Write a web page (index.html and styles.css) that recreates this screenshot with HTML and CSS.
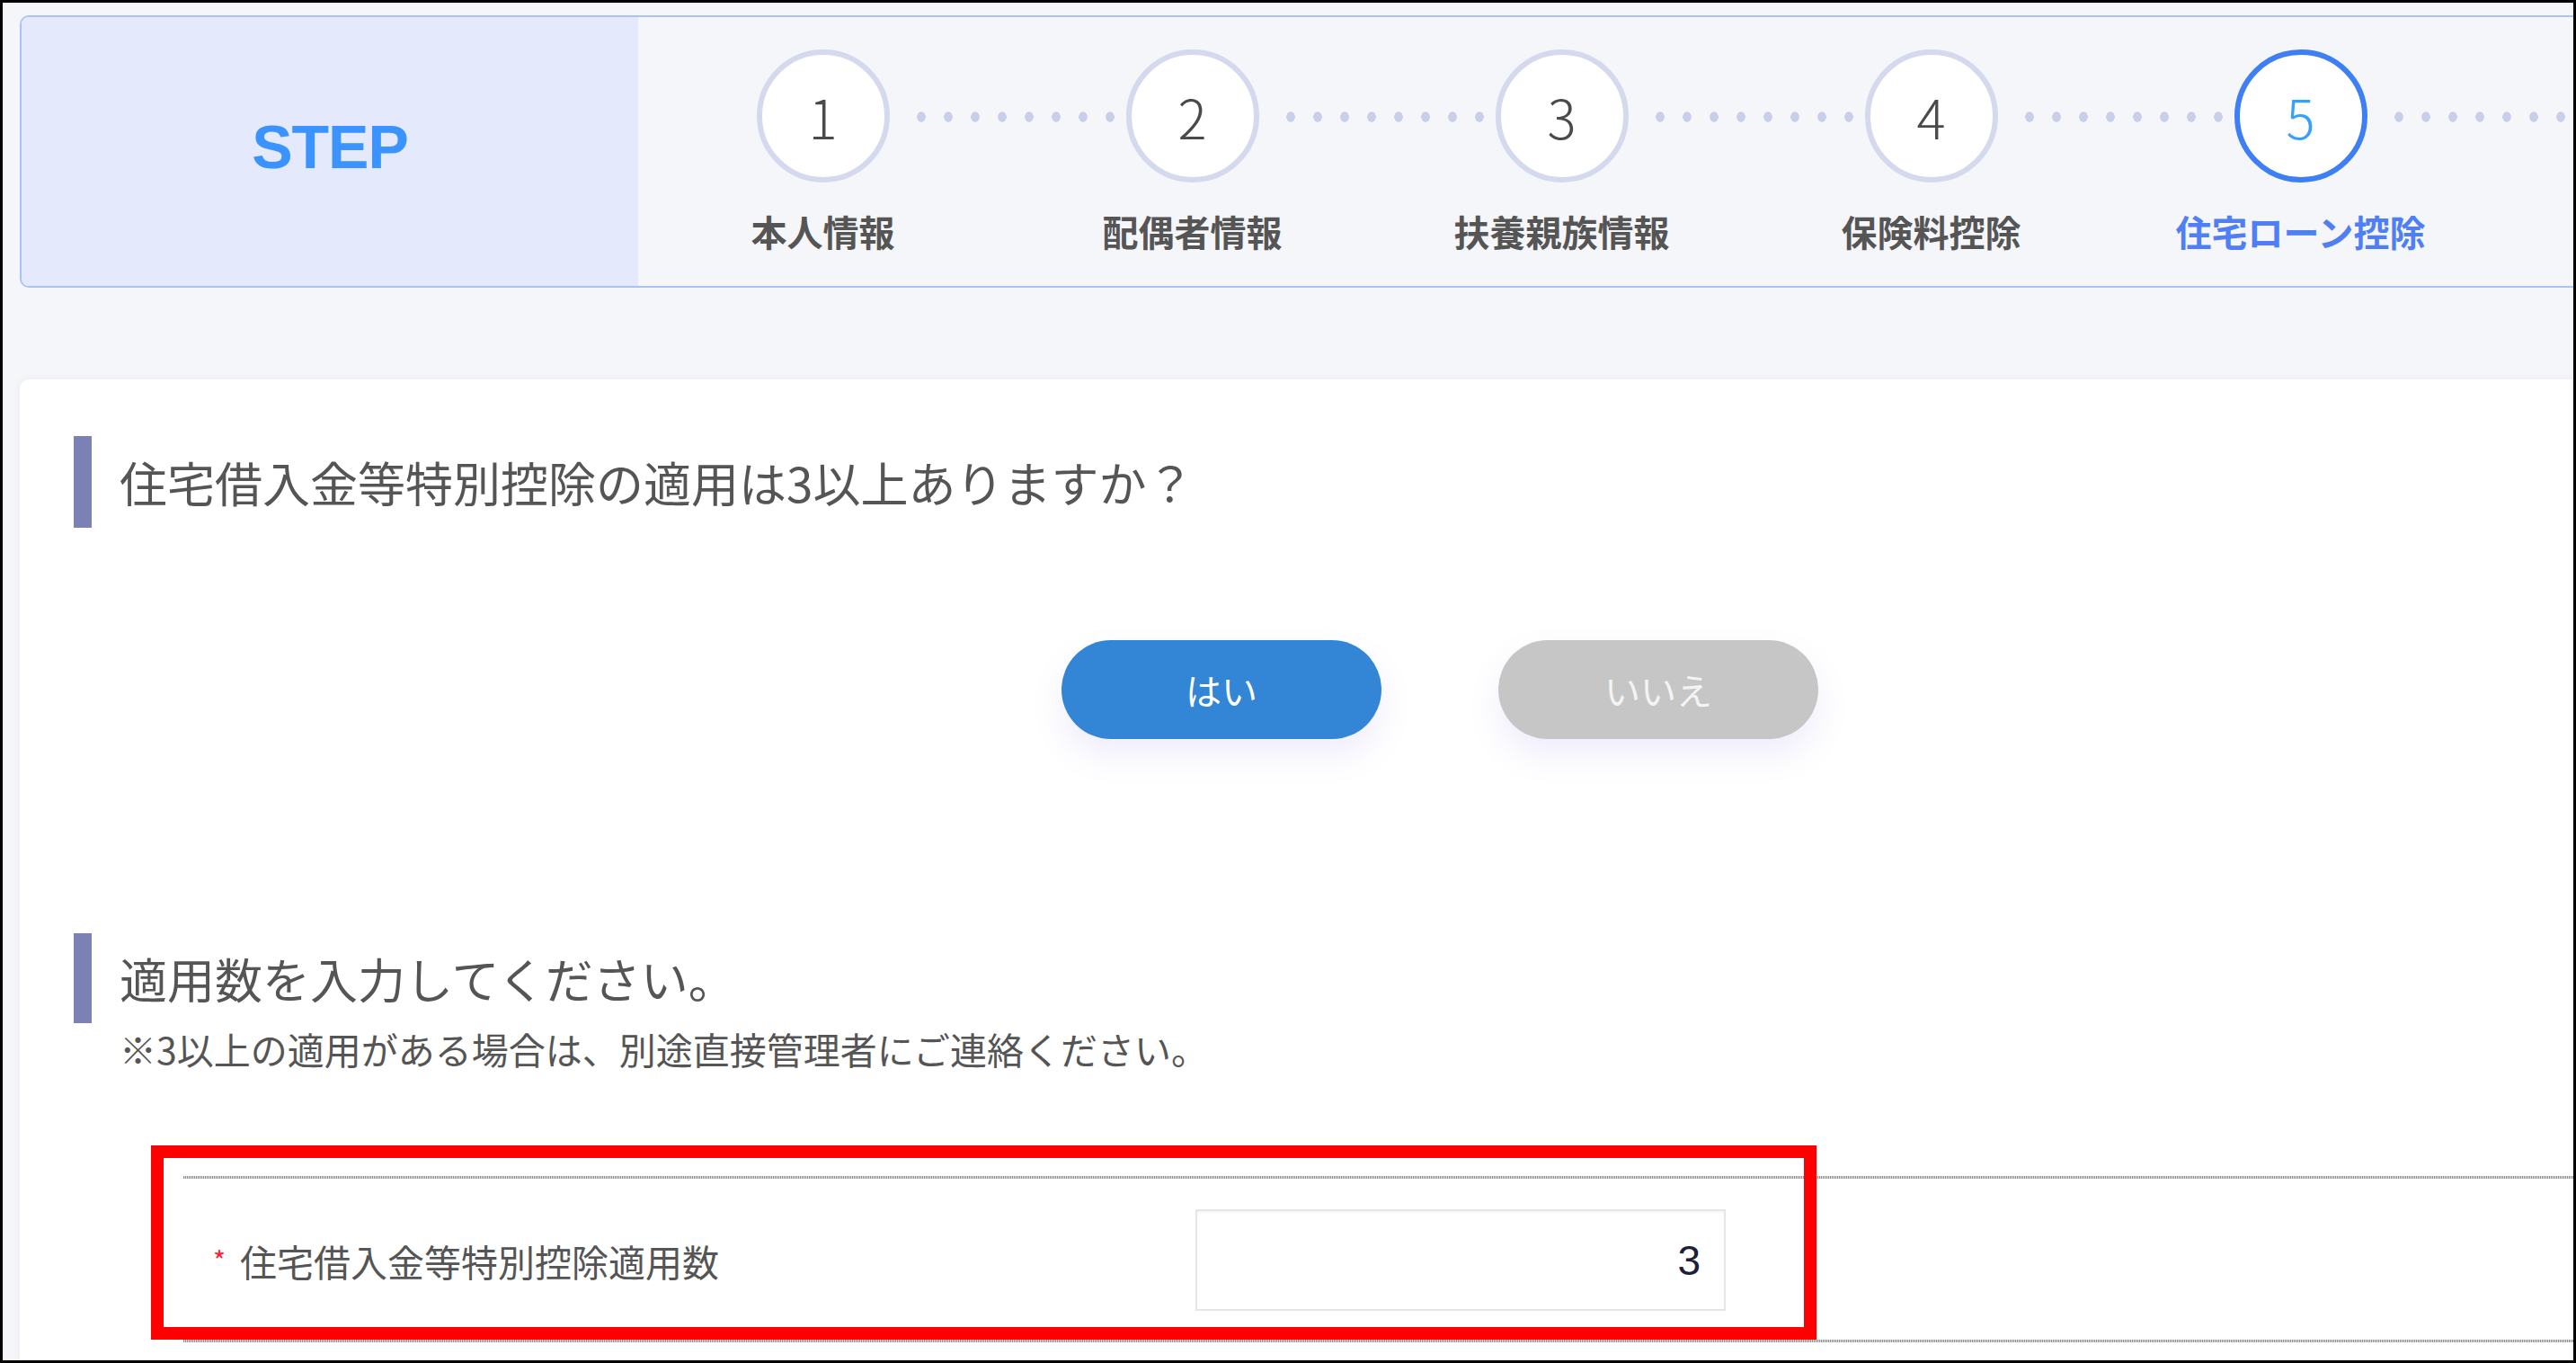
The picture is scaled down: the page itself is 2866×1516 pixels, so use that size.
FILE: index.html
```html
<!DOCTYPE html>
<html lang="ja">
<head>
    <meta charset="UTF-8">
    <meta name="viewport" content="width=device-width, initial-scale=1.0">
    <title>住宅ローン控除</title>
    <link rel="stylesheet" href="styles.css">
</head>
<body>

    <div class="frame">

        <!-- STEP BAR -->
        <nav class="stepper">
            <div class="stepper-title">STEP</div>
            <ol class="steps">
                <li class="step"><span class="step-num">1</span><span class="step-label">本人情報</span></li>
                <li class="step"><span class="step-num">2</span><span class="step-label">配偶者情報</span></li>
                <li class="step"><span class="step-num">3</span><span class="step-label">扶養親族情報</span></li>
                <li class="step"><span class="step-num">4</span><span class="step-label">保険料控除</span></li>
                <li class="step is-current"><span class="step-num">5</span><span class="step-label">住宅ローン控除</span></li>
            </ol>
        </nav>

        <!-- MAIN CARD -->
        <main class="card">
            <h2 class="section-title">住宅借入金等特別控除の適用は3以上ありますか？</h2>

            <div class="choice-row">
                <button class="choice-btn choice-yes">はい</button>
                <button class="choice-btn choice-no">いいえ</button>
            </div>

            <h2 class="section-title section-title-2">適用数を入力してください。</h2>
            <p class="note">※3以上の適用がある場合は、別途直接管理者にご連絡ください。</p>

            <div class="form-row">
                <label class="form-label" for="count"><span class="required">*</span>住宅借入金等特別控除適用数</label>
                <input class="form-input" id="count" type="text" value="3">
                <div class="highlight"></div>
            </div>
        </main>

    </div>

</body>
</html>
```

FILE: styles.css
```css
/* --- General --- */
html, body {
    margin: 0;
    padding: 0;
}

body {
    font-family: "Noto Sans CJK JP", "Noto Sans", sans-serif;
    color: #555;
    background: #fff;
}

.frame {
    position: relative;
    width: 2866px;
    height: 1516px;
    box-sizing: border-box;
    border: 3px solid #000;
    background-color: #f5f6fa;
    overflow: hidden;
}

/* --- Step bar --- */
.stepper {
    display: flex;
    width: 3200px;
    height: 303px;
    box-sizing: border-box;
    margin: 14px 0 0 19px;
    border: 2px solid #aac2f8;
    border-radius: 10px;
    overflow: hidden;
    background-color: #f5f6fa;
}

.stepper-title {
    flex: 0 0 686px;
    display: flex;
    align-items: center;
    justify-content: center;
    padding-bottom: 12px;
    box-sizing: border-box;
    background-color: #e4e9fb;
    color: #3a93ff;
    font-family: "Liberation Sans", Arial, sans-serif;
    font-weight: bold;
    font-size: 68px;
    letter-spacing: -1px;
}

.steps {
    display: flex;
    margin: 0;
    padding: 0;
    list-style: none;
}

.step {
    position: relative;
    flex: 0 0 411px;
    display: flex;
    flex-direction: column;
    align-items: center;
    padding-top: 36px;
}

/* dotted connector to the next step */
.step::after {
    content: "";
    position: absolute;
    top: 105px;
    left: 300px;
    width: 240px;
    height: 12px;
    background: radial-gradient(ellipse 5px 6px at center, #c9cee9 90%, transparent 100%) 0 0 / 30px 12px repeat-x;
}

.step-num {
    width: 148px;
    height: 148px;
    box-sizing: border-box;
    display: flex;
    align-items: center;
    justify-content: center;
    border: 6px solid #d5d9ee;
    border-radius: 50%;
    background: #fff;
    font-size: 60px;
    font-weight: 300;
    color: #4a4a4a;
    line-height: 1;
}

.step-label {
    margin-top: 26px;
    font-size: 40px;
    font-weight: bold;
    line-height: 56px;
    color: #555;
    white-space: nowrap;
}

.step.is-current .step-num {
    border-color: #3f7ff6;
    color: #36a0ff;
}

.step.is-current .step-label {
    color: #4f7ef5;
}

/* --- Card --- */
.card {
    width: 3160px;
    height: 1200px;
    box-sizing: border-box;
    margin: 102px 0 0 19px;
    padding: 63px 60px 0;
    background: #fff;
    border-radius: 10px;
    box-shadow: 0 0 10px rgba(0, 0, 0, 0.06);
}

.section-title {
    display: flex;
    align-items: center;
    height: 102px;
    margin: 0;
    padding-left: 31px;
    border-left: 20px solid #7b81b5;
    font-size: 53px;
    font-weight: 400;
    color: #555;
}

.section-title-2 {
    height: 100px;
    margin-top: 216px;
}

.choice-row {
    display: flex;
    justify-content: center;
    gap: 130px;
    margin-top: 125px;
}

.choice-btn {
    width: 356px;
    height: 110px;
    border: none;
    border-radius: 55px;
    font-family: inherit;
    font-size: 40px;
    color: #fff;
    box-shadow: 0 18px 36px rgba(120, 110, 220, 0.12);
    cursor: pointer;
}

.choice-yes {
    background-color: #3386d6;
}

.choice-no {
    background-color: #c6c6c6;
    color: #f4f4f4;
}

.note {
    margin: 0 0 0 51px;
    font-size: 41px;
    line-height: 56px;
    color: #555;
}

/* --- Form row --- */
.form-row {
    position: relative;
    display: flex;
    align-items: center;
    margin: 114px 0 0 122px;
    padding: 37px 0 35px;
    background-image:
        repeating-linear-gradient(90deg, #8f8f8f 0 1px, #e2e2e2 1px 2px),
        repeating-linear-gradient(90deg, #8f8f8f 0 1px, #e2e2e2 1px 2px);
    background-size: 100% 3px, 100% 3px;
    background-position: top left, bottom left;
    background-repeat: no-repeat;
}

.form-label {
    flex: 0 0 1126px;
    box-sizing: border-box;
    padding-left: 33px;
    font-size: 41px;
    color: #555;
}

.required {
    color: #ff2233;
    font-size: 30px;
    margin-right: 16px;
    vertical-align: 6px;
}

.form-input {
    width: 590px;
    height: 113px;
    box-sizing: border-box;
    padding: 0 26px 0 0;
    border: 2px solid #e6e6e6;
    box-shadow: inset 0 2px 3px rgba(0, 0, 0, 0.04);
    text-align: right;
    font-family: "Liberation Sans", Arial, sans-serif;
    font-size: 46px;
    color: #1e1e3c;
    outline: none;
}

/* red annotation box over the row */
.highlight {
    position: absolute;
    left: -36px;
    top: -34px;
    width: 1853px;
    height: 216px;
    box-sizing: border-box;
    border: 14px solid #ff0000;
    pointer-events: none;
}
```
